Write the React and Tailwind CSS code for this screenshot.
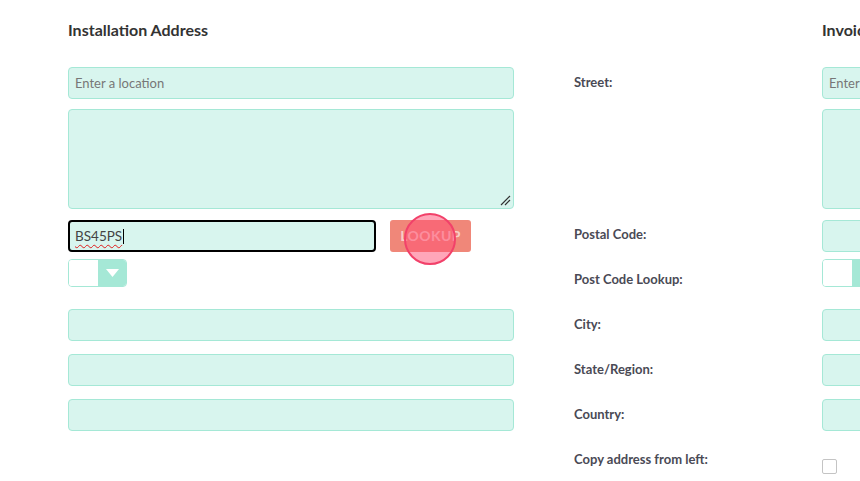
import React from "react";

const field = "h-[32px] w-full rounded-[4px] border border-[#a5e8d6] bg-[#d8f5ee]";
const label = "font-bold text-[#4a4a55]";

function Dropdown() {
  return (
    <div className="flex h-[28px] w-[59px] overflow-hidden rounded-[4px] border border-[#a5e8d6]">
      <div className="w-[29px] bg-white" />
      <div className="flex flex-1 items-center justify-center bg-[#a5e8d6]">
        <svg width="13" height="8" viewBox="0 0 13 8">
          <path d="M0 0h13L6.5 8z" fill="#fff" />
        </svg>
      </div>
    </div>
  );
}

function TextArea() {
  return (
    <div className="relative h-[100px] w-full rounded-[4px] border border-[#a5e8d6] bg-[#d8f5ee]">
      <svg className="absolute bottom-[2px] right-[2px]" width="12" height="12" viewBox="0 0 12 12">
        <path d="M2 11L11 2M6 11L11 6" stroke="#333" strokeWidth="1.2" />
      </svg>
    </div>
  );
}

export default function App() {
  return (
    <div
      className="h-[481px] w-[860px] overflow-hidden bg-white text-[13px]"
      style={{ fontFamily: "Lato, 'Liberation Sans', sans-serif" }}
    >
      <div className="grid grid-cols-[446px_60px_248px_446px] pl-[68px]">
        {/* titles */}
        <div className="col-start-1 mt-[20px] h-[20px] text-[16px] font-bold leading-[20px] text-[#333]">
          Installation Address
        </div>
        <div className="col-start-4 mt-[20px] h-[20px] text-[16px] font-bold leading-[20px] text-[#333]">
          Invoice Address
        </div>

        {/* street */}
        <div className={`col-start-1 mt-[27px] flex items-center px-[6px] pt-[2px] text-[#777] ${field}`}>
          Enter a location
        </div>
        <div className={`col-start-3 mt-[27px] flex items-center ${label}`}>Street:</div>
        <div className={`col-start-4 mt-[27px] flex items-center px-[6px] pt-[2px] text-[#777] ${field}`}>
          Enter a location
        </div>

        {/* textarea */}
        <div className="col-start-1 mt-[10px]">
          <TextArea />
        </div>
        <div className="col-start-4 mt-[10px]">
          <TextArea />
        </div>

        {/* postal code */}
        <div className="col-start-1 mt-[11px] flex items-center">
          <div className="flex h-[32px] w-[308px] items-center rounded-[4px] border-2 border-black bg-[#d8f5ee] px-[5px] text-[13.5px] text-[#444]">
            <span className="underline decoration-[#e01b1b] decoration-wavy decoration-1 underline-offset-[3px]">
              BS45PS
            </span>
            <span className="ml-[1px] h-[15px] w-[1px] bg-black" />
          </div>
          <div className="relative ml-[14px] -mt-[1px]">
            <div className="flex h-[32px] w-[81px] items-center justify-center rounded-[3px] bg-[#f08779] text-[14px] font-bold tracking-wide text-white/60">
              LOOKUP
            </div>
            <div className="absolute left-[14px] top-[-7px] h-[52px] w-[52px] rounded-full border-2 border-[#f2416a] bg-[#ff4d73]/50" />
          </div>
        </div>
        <div className={`col-start-3 mt-[11px] flex items-center pb-[2px] ${label}`}>Postal Code:</div>
        <div className={`col-start-4 mt-[11px] ${field}`} />

        {/* lookup select */}
        <div className="col-start-1 mt-[7px]">
          <Dropdown />
        </div>
        <div className={`col-start-3 mt-[7px] flex items-end leading-[20px] ${label}`}>
          <span className="translate-y-[2px]">Post Code Lookup:</span>
        </div>
        <div className="col-start-4 mt-[7px]">
          <Dropdown />
        </div>

        {/* city / state / country */}
        {[
          ["City:", "mt-[22px]"],
          ["State/Region:", "mt-[13px]"],
          ["Country:", "mt-[13px]"],
        ].map(([text, mt]) => (
          <React.Fragment key={text}>
            <div className={`col-start-1 ${mt} ${field}`} />
            <div className={`col-start-3 ${mt} flex items-center ${label}`}>{text}</div>
            <div className={`col-start-4 ${mt} ${field}`} />
          </React.Fragment>
        ))}

        {/* copy */}
        <div className={`col-start-3 mt-[18px] h-[20px] leading-[20px] ${label}`}>
          Copy address from left:
        </div>
        <div className="col-start-4 mt-[28px]">
          <div className="h-[15px] w-[15px] rounded-[2px] border border-[#c4c4c4] bg-white" />
        </div>
      </div>
    </div>
  );
}
